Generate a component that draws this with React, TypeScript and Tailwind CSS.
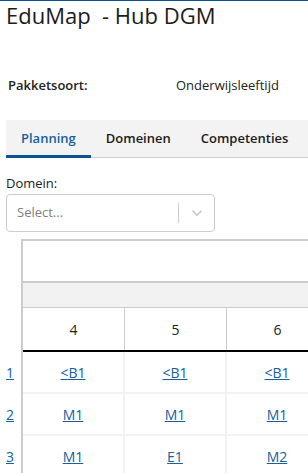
import React from 'react';

const columns = ['4', '5', '6'];

const rows: string[][] = [
  ['<B1', '<B1', '<B1'],
  ['M1', 'M1', 'M1'],
  ['M1', 'E1', 'M2'],
];

const tabs = ['Planning', 'Domeinen', 'Competenties'];

function Tabs() {
  return (
    <div className="ml-1.5 flex h-[38px] items-stretch border-b border-[#cfcfcf] bg-[#f3f3f3]">
      {tabs.map((tab, i) => (
        <div
          key={tab}
          className={
            i === 0
              ? 'flex items-center border-b-[3px] border-[#0b5394] px-[15px] pt-[3px] text-[13px] font-semibold text-[#15609f] -mb-px'
              : 'flex items-center px-[15px] text-[13px] font-semibold text-[#1c1c1c]'
          }
        >
          {tab}
        </div>
      ))}
    </div>
  );
}

function DomainSelect() {
  return (
    <div className="ml-1.5 mt-[16px]">
      <div className="text-[13px] leading-[18px] text-[#222]">Domein:</div>
      <div className="mt-[2px] flex h-[38px] w-[209px] items-center rounded border border-[#cccccc] bg-white">
        <span className="flex-1 pl-[10px] text-[13px] text-[#808080]">Select...</span>
        <span className="h-[20px] w-px bg-[#cccccc]" />
        <span className="flex w-[35px] justify-center">
          <svg width="12" height="8" viewBox="0 0 12 8" fill="none">
            <path d="M1.5 1.8L6 6.2L10.5 1.8" stroke="#c4c4c4" strokeWidth="1.6" />
          </svg>
        </span>
      </div>
    </div>
  );
}

function PlanningTable() {
  return (
    <div className="mt-[7px] flex">
      {/* row numbers sit outside the grid */}
      <div className="w-[21px] shrink-0 pt-[113px]">
        {rows.map((_, i) => (
          <div key={i} className="flex h-[42px] items-center pb-[2px] pl-1.5">
            <a className="text-[14px] text-[#15609f] underline">{i + 1}</a>
          </div>
        ))}
      </div>
      <div className="w-[320px] shrink-0 border-l-2 border-t-2 border-[#cccccc]">
        <div className="h-[42px] border-b-2 border-[#cccccc] bg-white" />
        <div className="h-[25px] border-b border-[#cccccc] bg-[#f2f2f2]" />
        <div className="flex h-[44px] border-b-2 border-black">
          {columns.map((c) => (
            <div
              key={c}
              className="flex w-[102px] shrink-0 items-center justify-center border-r border-[#cccccc] text-[14px] text-[#222]"
            >
              {c}
            </div>
          ))}
        </div>
        {rows.map((row, i) => (
          <div key={i} className="flex h-[42px] border-b-2 border-[#f2f2f2]">
            {row.map((cell, j) => (
              <div
                key={j}
                className="flex w-[102px] shrink-0 items-center justify-center border-r-2 border-[#f2f2f2]"
              >
                <a className="text-[14px] text-[#15609f] underline">{cell}</a>
              </div>
            ))}
          </div>
        ))}
      </div>
    </div>
  );
}

export default function App() {
  return (
    <div
      className="h-[473px] w-[308px] overflow-hidden border-t border-[#0b5394] bg-white"
      style={{ fontFamily: '"Open Sans", "Noto Sans", sans-serif' }}
    >
      <h1 className="ml-1.5 whitespace-pre text-[22px] leading-[28px] text-[#1b1b1b]">EduMap  - Hub DGM</h1>
      <div className="mt-[43px] flex h-[28px] items-center text-[13px] text-[#222]">
        <span className="w-[176px] pl-2 font-semibold">Pakketsoort:</span>
        <span>Onderwijsleeftijd</span>
      </div>
      <div className="mt-[20px]">
        <Tabs />
      </div>
      <DomainSelect />
      <PlanningTable />
    </div>
  );
}
